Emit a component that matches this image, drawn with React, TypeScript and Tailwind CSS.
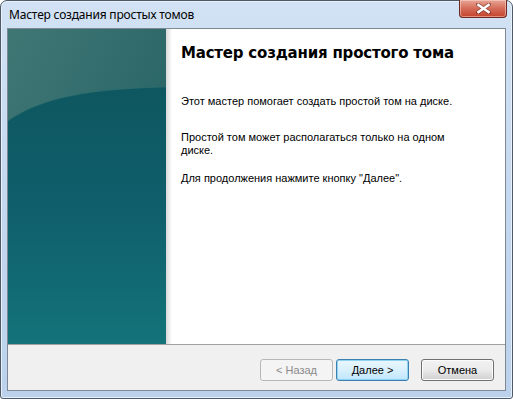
import React from "react";

function LeftPanel() {
  return (
    <div className="relative w-[158px] h-full shrink-0">
      <svg width="158" height="315" viewBox="0 0 158 315" className="block">
        <defs>
          <linearGradient id="top" x1="0" y1="0" x2="1" y2="1">
            <stop offset="0" stopColor="#3f7775" />
            <stop offset="0.6" stopColor="#2c6768" />
            <stop offset="1" stopColor="#236067" />
          </linearGradient>
          <linearGradient id="bot" x1="0" y1="0" x2="0" y2="1">
            <stop offset="0" stopColor="#0e5760" />
            <stop offset="0.45" stopColor="#0f5e6b" />
            <stop offset="1" stopColor="#137379" />
          </linearGradient>
        </defs>
        <rect x="0" y="0" width="158" height="315" fill="url(#top)" />
        <path d="M0 92 C 28 72, 70 60, 158 58 L158 315 L0 315 Z" fill="url(#bot)" />
        <path d="M0 92 C 28 72, 70 60, 158 58" fill="none" stroke="#2f6f70" strokeWidth="1" opacity="0.6" />
      </svg>
    </div>
  );
}

function Btn({ children, variant }: { children: React.ReactNode; variant: "disabled" | "default" | "normal" }) {
  const base =
    "w-[73px] h-[22px] rounded-[3px] flex items-center justify-center text-[11px] leading-none font-['Liberation_Sans',Arial,sans-serif]";
  if (variant === "disabled")
    return <div className={base + " border border-[#b5b8bb] bg-[#f4f4f4] text-[#8b8b8b]"}>{children}</div>;
  if (variant === "default")
    return (
      <div className={base + " border border-[#3c7fb1] bg-gradient-to-b from-[#eaf6fd] via-[#d9f0fc] to-[#bee6fd] text-black shadow-[inset_0_0_0_1px_#8fd3f4]"}>
        {children}
      </div>
    );
  return (
    <div className={base + " border border-[#707070] bg-gradient-to-b from-[#f2f2f2] via-[#ebebeb] to-[#cfcfcf] text-black shadow-[inset_0_0_0_1px_#fcfcfc]"}>
      {children}
    </div>
  );
}

export default function App() {
  return (
    <div className="w-[513px] h-[399px] bg-white">
      <div className="w-[513px] h-[399px] flex flex-col rounded-t-[7px] rounded-b-[3px] border border-[#4f5a66] bg-gradient-to-b from-[#d2e2f4] via-[#c4d8ef] to-[#bcd2ec] shadow-[inset_0_0_0_1px_#e8f1fb]">
        <div className="h-[27px] flex items-start justify-between pl-[8px] pr-[5px]">
          <div className="pt-[6px] text-[12px] leading-[15px] text-black font-['Noto_Sans',sans-serif] tracking-[-0.2px]">
            Мастер создания простых томов
          </div>
          <div className="w-[48px] h-[18px] -mt-px rounded-b-[4px] border border-[#6b2a21] border-t-0 bg-gradient-to-b from-[#e8a597] via-[#d46b58] to-[#c4412b] shadow-[inset_0_0_0_1px_rgba(255,220,210,0.5)] flex items-center justify-center">
            <svg width="15" height="11" viewBox="0 0 15 11">
              <path d="M2 1.5 L13 9.5 M13 1.5 L2 9.5" stroke="#5a2019" strokeWidth="4" strokeLinecap="square" opacity="0.55" />
              <path d="M2.5 2 L12.5 9 M12.5 2 L2.5 9" stroke="#ffffff" strokeWidth="2.6" strokeLinecap="square" />
            </svg>
          </div>
        </div>
        <div className="mx-[6px] flex-1 flex flex-col border border-[#7d8894] bg-[#f0f0f0] mb-[7px]">
          <div className="h-[315px] flex bg-white">
            <LeftPanel />
            <div className="w-[6px] h-full bg-gradient-to-r from-[#d9d9d9] via-[#ececec] to-white" />
            <div className="flex-1 pl-[9px] pt-[14px]">
              <div className="text-[15px] leading-[20px] font-bold text-black font-['DejaVu_Sans',Verdana,sans-serif] tracking-[-0.2px]">
                Мастер создания простого тома
              </div>
              <div className="mt-[32px] text-[11px] leading-[13px] text-black font-['Liberation_Sans',Arial,sans-serif]">
                <p>Этот мастер помогает создать простой том на диске.</p>
                <p className="mt-[23px]">
                  Простой том может располагаться только на одном
                  <br />
                  диске.
                </p>
                <p className="mt-[15px]">Для продолжения нажмите кнопку "Далее".</p>
              </div>
            </div>
          </div>
          <div className="h-px bg-[#a0a0a0]" />
          <div className="flex-1 flex items-start justify-end pt-[14px] pr-[11px]">
            <Btn variant="disabled">&lt; Назад</Btn>
            <div className="w-[3px]" />
            <Btn variant="default">Далее &gt;</Btn>
            <div className="w-[12px]" />
            <Btn variant="normal">Отмена</Btn>
          </div>
        </div>
      </div>
    </div>
  );
}
